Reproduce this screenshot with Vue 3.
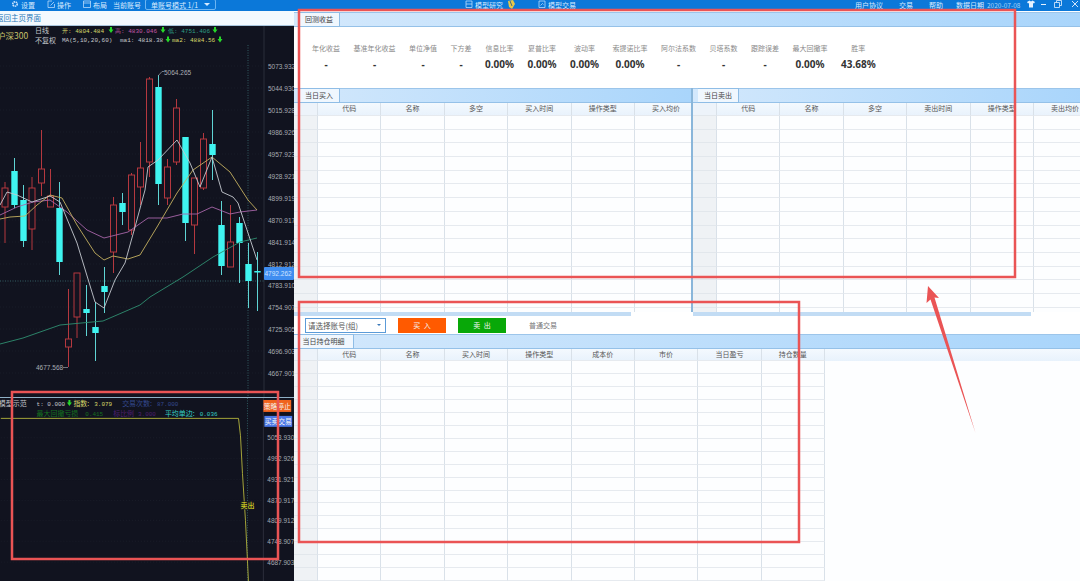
<template>
  <div class="screen">
    <header class="topbar">
      <svg class="ico first" viewBox="0 0 8 8"><circle cx="4" cy="4" r="2.2" fill="none" stroke="#cfe6ff" stroke-width="1.6" stroke-dasharray="1.4 .6" /></svg>
      <span class="tb t1">设置</span>
      <svg class="ico i2" viewBox="0 0 8 8"><path d="M1 7.5V1h4M7 2 3.5 5.5M7.5 4v3.5H1" fill="none" stroke="#cfe6ff" stroke-width=".7" /></svg>
      <span class="tb t1">操作</span>
      <svg class="ico i2" viewBox="0 0 8 8"><path d="M.5 1h7v6.5h-7zM.5 3h7" fill="none" stroke="#cfe6ff" stroke-width=".7" /></svg>
      <span class="tb t1">布局</span>
      <span class="tb account">当前账号</span>
      <div class="mode"><span>单账号模式 1/1</span><i class="caret"></i></div>
      <svg class="ico research" viewBox="0 0 8 8"><path d="M1 1h6v6.5H1zM1 4h6" fill="none" stroke="#cfe6ff" stroke-width=".7" /></svg>
      <span class="tb t1">模型研究</span>
      <svg class="ico sticker" viewBox="0 0 10 10"><path d="M2 1 7 0l2 4-3 5-3-2z" fill="#e6c84a" /><path d="M4 1l2 5" stroke="#3a6a8a" stroke-width="1" /></svg>
      <svg class="ico trade" viewBox="0 0 8 8"><path d="M1 1h6v6.5H1zM2.5 5.5l2-2 1 1" fill="none" stroke="#cfe6ff" stroke-width=".7" /></svg>
      <span class="tb t1">模型交易</span>
      <span class="tb protocol">用户协议</span>
      <span class="tb m16">交易</span>
      <span class="tb m16">帮助</span>
      <span class="tb m13">数据日期</span>
      <span class="tb date">2020-07-08</span>
      <svg class="ico shirt" viewBox="0 0 8 8"><path d="M2.5 .5 0 2l1 1.5 1-.5v4.5h4V3l1 .5L8 2 5.500 .5 4 1.500z" fill="#e4f1ff" /></svg>
      <i class="minimize"></i>
      <svg class="ico restore" viewBox="0 0 8 8"><path d="M.5 2.500h5v5h-5zM2.500 2.500V.5h5v5h-2" fill="none" stroke="#e4f1ff" stroke-width=".8" /></svg>
      <svg class="ico close" viewBox="0 0 6 8"><path d="M0 1l6 6M6 1 0 7" stroke="#e4f1ff" stroke-width=".9" /></svg>
    </header>

    <div class="body">
      <aside class="left">
        <div class="crumb"><span>返回主页界面</span></div>

        <svg class="chart" viewBox="0 26 294 371">
          <line v-for="y in priceRows" :key="'g' + y.y" x1="0" x2="264" :y1="y.y" :y2="y.y" class="grid-line" />
          <line x1="264" x2="264" y1="26" y2="397" class="axis" />
          <line x1="248" x2="248" y1="45" y2="397" class="cross" />
          <line x1="0" x2="264" y1="281" y2="281" class="cross" />

          <g v-for="c in candles" :key="c.x">
            <line :x1="c.x" :x2="c.x" :y1="c.hi" :y2="c.lo" :class="c.up ? 'wick-up' : 'wick-down'" />
            <rect v-if="c.up" :x="c.x - 3" :y="c.top" width="6" :height="c.bot - c.top" class="body-up" />
            <rect v-else :x="c.x - 3.2" :y="c.top" width="6.400" :height="c.bot - c.top" class="body-down" />
          </g>

          <polyline :points="ma60" class="ma green" />
          <polyline :points="ma20" class="ma purple" />
          <polyline :points="ma10" class="ma yellow" />
          <polyline :points="ma5" class="ma white" />

          <path d="M158 76 162 71.500h2" class="leader" />
          <text x="164" y="74.500" class="mark">5064.265</text>
          <path d="M63 367.500h5" class="leader" />
          <text x="36" y="370" class="mark">4677.568</text>

          <text x="-3" y="39" class="head index">沪深300</text>
          <text x="35" y="33" class="head">日线</text>
          <text x="35" y="42.500" class="head">不复权</text>
          <text x="62" y="32.500" class="small y">开: 4804.484</text>
          <text x="115" y="32.500" class="small pink">高: 4830.046</text>
          <text x="168" y="32.500" class="small teal">低: 4751.406</text>
          <text x="62" y="42" class="small w">MA(5,10,20,60)</text>
          <text x="120" y="42" class="small w">ma1: 4818.38</text>
          <text x="172" y="42" class="small y">ma2: 4884.56</text>
          <path
            v-for="a in headArrows"
            :key="a.x + '-' + a.y"
            :transform="`translate(${a.x} ${a.y})`"
            d="M-1 0h2v2.500h1.500L0 6-2.500 2.500H-1z"
            class="arrow"
          />

          <text v-for="p in priceRows" :key="p.label" x="268" :y="p.y + 2.500" class="price">{{ p.label }}</text>
          <rect x="264" y="267" width="30" height="13" rx="1" class="now" />
          <text x="264.500" y="276" class="now-text">4792.262</text>
        </svg>

        <svg class="chart lower" viewBox="0 397 294 184">
          <line v-for="p in lowerRows" :key="'l' + p.y" x1="0" x2="264" :y1="p.y" :y2="p.y" class="grid-line" />
          <line x1="264" x2="264" y1="397" y2="581" class="axis" />
          <line x1="248" x2="248" y1="397" y2="581" class="cross" />
          <polyline points="0,417.500 239,417.500 241,435 243,473 246,520 248,560 249,581" class="ma curve" />
          <text x="-2" y="405" class="head">模型示范</text>
          <text x="36" y="405" class="small w">t: 0.000</text>
          <path transform="translate(69 399)" d="M-1 0h2v2.500h1.500L0 6-2.500 2.500H-1z" class="arrow" />
          <text x="73" y="405" class="head y">指数:</text>
          <text x="94" y="405" class="small y">3.079</text>
          <text x="122" y="405" class="head navy">交易次数:</text>
          <text x="157" y="405" class="small navy">87.000</text>
          <text x="36" y="415" class="head dgreen">最大回撤亏损</text>
          <text x="85" y="415" class="small dgreen">0.415</text>
          <text x="113" y="415" class="head dpurple">标比例</text>
          <text x="138" y="415" class="small dpurple">3.000</text>
          <text x="165" y="415" class="head cyan">平均单边:</text>
          <text x="200" y="415" class="small cyan">0.036</text>
          <rect x="264" y="399" width="28" height="12" class="stop" />
          <text x="264.500" y="408" class="btn-text">策略停止</text>
          <rect x="265" y="415" width="28" height="11" class="deal" />
          <text x="265.500" y="423.500" class="btn-text">买卖交易</text>
          <text v-for="p in lowerRows" :key="p.label" x="268" :y="p.y + 2.500" class="price">{{ p.label }}</text>
          <rect x="241" y="501" width="14" height="8" class="sold-bg" />
          <text x="241" y="507.500" class="sold">卖出</text>
        </svg>
      </aside>

      <main class="right">
        <div class="strip first-strip"><i class="grip"></i><span class="tab">回测收益</span></div>
        <div class="stats">
          <div v-for="s in stats" :key="s.label" class="stat">
            <span class="stat-label">{{ s.label }}</span>
            <span class="stat-value">{{ s.value }}</span>
          </div>
        </div>

        <div class="split">
          <section v-for="t in dayTables" :key="t.title" class="pane">
            <div class="strip"><i class="grip"></i><span class="tab">{{ t.title }}</span></div>
            <div class="trow thead">
              <span class="corner"></span>
              <span v-for="c in t.cols" :key="c" class="cell">{{ c }}</span>
            </div>
            <div v-for="r in 15" :key="r" class="trow">
              <span class="corner"></span>
              <span v-for="c in t.cols" :key="c" class="cell"></span>
            </div>
          </section>
        </div>
        <div class="scroll"><i class="thumb"></i><i class="thumb second"></i></div>

        <div class="toolbar">
          <div class="picker"><span>请选择账号(组)</span><i class="picker-caret"></i></div>
          <button class="act buy">买 入</button>
          <button class="act sell">卖 出</button>
          <span class="plain">普通交易</span>
        </div>
        <div class="strip"><span class="tab wide">当日持仓明细</span></div>
        <div class="trow thead full">
          <span class="corner"></span>
          <span v-for="c in holdCols" :key="c" class="cell">{{ c }}</span>
        </div>
        <div v-for="r in 17" :key="r" class="trow">
          <span class="corner"></span>
          <span v-for="c in holdCols" :key="c" class="cell"></span>
        </div>
      </main>
    </div>

    <!-- 截图上的红色标注 -->
    <svg class="marks" viewBox="0 0 1080 581">
      <rect x="299" y="10" width="716" height="267" />
      <rect x="299" y="302" width="500" height="240" />
      <rect x="12" y="392" width="266" height="167" />
      <path d="M928 286 939 298 934.500 297.500 975.500 433 930.500 299.500 926.500 303z" class="pointer" />
    </svg>
  </div>
</template>

<script setup>
const candle = (x, hi, lo, top, bot, up) => ({ x, hi, lo, top, bot, up })

const candles = [
  candle(5, 182, 243, 188, 207, true),
  candle(14.5, 158, 208, 171, 205, false),
  candle(23.5, 185, 247, 200, 241, false),
  candle(32, 177, 250, 188, 229, true),
  candle(41.5, 130, 196, 169, 183, true),
  candle(50.5, 169, 207, 196, 207, true),
  candle(59.5, 182, 275, 208, 262, false),
  candle(68.5, 289, 367, 339, 347, true),
  candle(77, 273, 338, 273, 317, true),
  candle(86.5, 285, 336, 309, 313, false),
  candle(95.5, 302, 361, 327, 333, false),
  candle(104.5, 267, 313, 286, 292, false),
  candle(113.5, 197, 273, 205, 252, true),
  candle(122.5, 193, 225, 203, 212, false),
  candle(131.5, 173, 235, 175, 230, true),
  candle(140.5, 142, 205, 168, 187, true),
  candle(149.5, 77, 177, 79, 162, true),
  candle(158.5, 75, 205, 87, 184, false),
  candle(167.5, 159, 205, 167, 198, true),
  candle(176.5, 99, 165, 108, 162, true),
  candle(185.5, 137, 241, 137, 223, false),
  candle(194.5, 178, 254, 178, 225, true),
  candle(203.5, 133, 190, 139, 188, true),
  candle(212.5, 110, 180, 144, 155, false),
  candle(221.5, 201, 275, 225, 266, false),
  candle(230.5, 205, 267, 242, 267, true),
  candle(239.5, 217, 283, 223, 243, false),
  candle(248.5, 243, 308, 264, 281, false),
  candle(257.5, 252, 311, 271, 272.5, false)
]

const ma5 = '0,205 7,192 17,195 32,202 50,196 60,202 77,243 95,302 104,308 115,280 125,263 135,227 145,190 148,167 158,160 177,140 190,163 200,187 212,157 222,192 233,197 238,203 248,233 257,260'
const ma10 = '0,219 10,217 25,216 37,205 50,195 62,198 77,225 95,253 104,260 113,256 128,259 140,255 157,227 177,193 193,170 212,157 230,172 248,200 257,210'
const ma20 = '0,215 17,207 33,202 50,200 67,212 87,230 104,238 128,232 148,218 167,218 183,214 197,214 212,207 230,214 240,212 257,210'
const ma60 = '0,344 23,338 60,325 103,321 140,305 150,297 183,277 213,257 240,242 257,238'

const headArrows = [
  { x: 111, y: 27 }, { x: 163, y: 27 }, { x: 215, y: 27 },
  { x: 168, y: 36.5 }, { x: 220, y: 36.5 }
]

const priceRows = [
  ['5073.932', 66], ['5044.930', 88], ['5015.928', 110], ['4986.926', 132], ['4957.923', 154],
  ['4928.921', 176], ['4899.919', 198], ['4870.917', 220], ['4841.914', 242], ['4812.912', 264],
  ['4783.910', 285], ['4754.907', 307], ['4725.905', 329], ['4696.903', 351], ['4667.901', 373]
].map(([label, y]) => ({ label, y }))

const lowerRows = [
  ['5053.930', 437], ['4992.926', 458], ['4931.921', 479], ['4870.917', 500],
  ['4809.912', 520], ['4748.907', 541], ['4687.903', 562]
].map(([label, y]) => ({ label, y }))

const stats = [
  { label: '年化收益', value: '-' },
  { label: '基准年化收益', value: '-' },
  { label: '单位净值', value: '-' },
  { label: '下方差', value: '-' },
  { label: '信息比率', value: '0.00%' },
  { label: '夏普比率', value: '0.00%' },
  { label: '波动率', value: '0.00%' },
  { label: '索提诺比率', value: '0.00%' },
  { label: '阿尔法系数', value: '-' },
  { label: '贝塔系数', value: '-' },
  { label: '跟踪误差', value: '-' },
  { label: '最大回撤率', value: '0.00%' },
  { label: '胜率', value: '43.68%' }
]

const dayTables = [
  { title: '当日买入', cols: ['代码', '名称', '多空', '买入时间', '操作类型', '买入均价'] },
  { title: '当日卖出', cols: ['代码', '名称', '多空', '卖出时间', '操作类型', '卖出均价'] }
]

const holdCols = ['代码', '名称', '买入时间', '操作类型', '成本价', '市价', '当日盈亏', '持仓数量']
</script>

<style scoped>
.screen {
  position: relative;
  width: 1080px;
  height: 581px;
  overflow: hidden;
  display: flex;
  flex-direction: column;
  background: #fff;
  font-family: "Noto Sans CJK SC", "Noto Sans", sans-serif;
}

.topbar {
  flex: none;
  height: 11px;
  display: flex;
  align-items: center;
  overflow: hidden;
  background: #0b78d9;
  color: #d8ebff;
  font-size: 7px;
  line-height: 8px;
}
.tb { flex: none; margin-top: -2px; }
.t1 { margin-left: 2px; }
.ico { flex: none; width: 8px; height: 8px; margin-top: -3px; }
.ico.first { margin-left: 11px; }
.ico.i2 { margin-left: 12px; }
.account { margin-left: 6px; }
.mode {
  flex: none;
  width: 71px;
  height: 11px;
  margin: -3px 0 0 4px;
  padding: 1px 5px 0;
  box-sizing: border-box;
  display: flex;
  justify-content: space-between;
  align-items: center;
  border: 1px solid #6db5f2;
  border-radius: 2px;
}
.caret { border: 3px solid transparent; border-top-color: #d8ebff; border-bottom: 0; }
.research { margin-left: 249px; }
.sticker { width: 10px; height: 10px; margin-left: 3px; margin-top: -1px; }
.trade { margin-left: 22px; }
.protocol { margin-left: 279px; }
.m16 { margin-left: 16px; }
.m13 { margin-left: 13px; }
.date { margin-left: 3px; font-size: 6.500px; color: #a8d2f8; }
.shirt { margin-left: 7px; }
.minimize { flex: none; width: 5px; height: 1px; margin: -3px 0 0 6px; background: #e4f1ff; }
.restore { margin-left: 8px; }
.close { width: 6px; margin-left: 10px; }

.body { flex: 1; min-height: 0; display: flex; }

.left {
  flex: none;
  width: 294px;
  display: flex;
  flex-direction: column;
  background: #11131f;
}
.crumb {
  flex: none;
  height: 15px;
  box-sizing: border-box;
  background: #f3f9fe;
  border-bottom: 1px solid #a8c4dc;
  color: #2b78b8;
  font-size: 7.500px;
  line-height: 13px;
  overflow: hidden;
}
.crumb span { margin-left: -4px; display: block; }
.chart { flex: none; display: block; width: 294px; height: 371px; background: #11131f; }
.chart.lower { height: 184px; border-top: 1px solid #8fb0c6; box-sizing: border-box; }

.grid-line { stroke: #20232f; stroke-width: .6; stroke-dasharray: 1 2; }
.axis { stroke: #2b2e3b; stroke-width: 1; }
.cross { stroke: #3f7d80; stroke-width: .7; stroke-dasharray: 1 1.500; }
.wick-up { stroke: #b5383f; stroke-width: 1; }
.wick-down { stroke: #5fd4d4; stroke-width: 1; }
.body-up { fill: #151320; stroke: #b5383f; stroke-width: 1; }
.body-down { fill: #3ff4f0; }
.ma { fill: none; stroke-width: .9; }
.white { stroke: #c5c9d0; }
.yellow { stroke: #c4b060; }
.purple { stroke: #a765a8; }
.green { stroke: #2f8f70; }
.curve { stroke: #b4b43c; }
.leader { fill: none; stroke: #9aa0a8; stroke-width: .7; }
.mark { fill: #a9adb3; font-size: 6.500px; font-family: "Liberation Sans", sans-serif; }
.head { fill: #c4c7cc; font-size: 7px; }
.index { fill: #c9c26a; font-size: 8.500px; }
.small { font-size: 6px; font-family: "Liberation Mono", monospace; }
.y { fill: #d8d86a; }
.w { fill: #c4c7cc; }
.pink { fill: #c257a8; }
.teal { fill: #2f9f85; }
.navy { fill: #34498e; }
.dgreen { fill: #14701e; }
.dpurple { fill: #4e1f70; }
.cyan { fill: #35d0c4; }
.arrow { fill: #27d72a; }
.price { fill: #a7abb2; font-size: 6.500px; font-family: "Liberation Sans", sans-serif; }
.now { fill: #3f8df0; }
.now-text { fill: #cfe3ff; font-size: 6.500px; font-family: "Liberation Sans", sans-serif; }
.stop { fill: #f0641e; }
.deal { fill: #4a78e8; }
.btn-text { fill: #f4f4f4; font-size: 6.800px; }
.sold-bg { fill: #1c1d20; }
.sold { fill: #f2f020; font-size: 7px; }

.right {
  flex: none;
  width: 786px;
  display: flex;
  flex-direction: column;
  overflow: hidden;
  background: #fdfeff;
  color: #555;
  font-size: 7px;
}
.strip {
  flex: none;
  height: 15px;
  box-sizing: border-box;
  display: flex;
  background: linear-gradient(90deg, #d3e8fc, #a9d5fb);
  border-top: 1px solid #9cc5ea;
  border-bottom: 1px solid #95c1e8;
}
.first-strip { margin-top: 1px; }
.grip { flex: none; width: 5px; }
.tab {
  flex: none;
  width: 41px;
  box-sizing: border-box;
  text-align: center;
  line-height: 12px;
  background: #f0f7fe;
  border-right: 1px solid #8fbde6;
  color: #444;
  margin-top: -1px;
  margin-bottom: -1px;
  border-top: 1px solid #8fbde6;
  border-bottom: 1px solid #8fbde6;
}
.tab.wide { width: 60px; }

.stats {
  flex: none;
  height: 61px;
  box-sizing: border-box;
  padding: 16px 0 0 18px;
  display: flex;
  gap: 13.500px;
  background: #fff;
}
.stat { flex: none; display: flex; flex-direction: column; align-items: center; gap: 5px; }
.stat-label { line-height: 10px; color: #8a8a8a; }
.stat-value {
  line-height: 12px;
  font-family: "Noto Sans", sans-serif;
  font-size: 10px;
  font-weight: 700;
  color: #333;
}

.split { flex: none; height: 224px; display: flex; overflow: hidden; }
.pane { flex: none; width: 397px; overflow: hidden; }
.pane + .pane { width: 389px; border-left: 2px solid #8ab6da; }

.trow { display: flex; height: 13.700px; box-sizing: border-box; }
.thead { height: 13px; background: linear-gradient(#f4f9fe, #e8f2fc); line-height: 11px; color: #555; }
.full { width: 786px; }
.corner {
  flex: none;
  width: 24px;
  background: #eff2f5;
  border-right: 1px solid #d9e1e9;
  border-bottom: 1px solid #e2e7ec;
  box-sizing: border-box;
}
.thead .corner { background: #edf3fa; }
.cell {
  flex: none;
  width: 63.375px;
  box-sizing: border-box;
  text-align: center;
  border-right: 1px solid #d9e1e9;
  border-bottom: 1px solid #e6eaef;
}

.scroll { flex: none; height: 4px; display: flex; background: #fff; }
.thumb { flex: none; width: 337px; height: 4px; background: #c2dcf4; }
.thumb.second { width: 338px; margin-left: 62px; }

.toolbar {
  flex: none;
  height: 18px;
  display: flex;
  align-items: center;
  background: #fff;
  padding-left: 11px;
}
.picker {
  flex: none;
  width: 81px;
  height: 15px;
  box-sizing: border-box;
  padding: 0 4px 0 2px;
  display: flex;
  align-items: center;
  justify-content: space-between;
  border: 1px solid #5b9bd8;
  color: #555;
  font-size: 7.500px;
}
.picker-caret { border: 2.500px solid transparent; border-top-color: #3a78b8; border-bottom: 0; }
.act {
  flex: none;
  width: 48px;
  height: 15px;
  padding: 0;
  border: 0;
  color: #f4f4f4;
  font: inherit;
  line-height: 15px;
  word-spacing: 2px;
}
.buy { margin-left: 12px; background: #ff5a00; }
.sell { margin-left: 12px; background: #08a808; }
.plain { margin-left: 23px; color: #777; }

.marks {
  position: absolute;
  left: 0;
  top: 0;
  width: 1080px;
  height: 581px;
  pointer-events: none;
}
.marks rect { fill: none; stroke: #ea5455; stroke-width: 2.500; }
.marks .pointer { fill: #ea5455; stroke: none; }
</style>

<style>
html, body { margin: 0; overflow: hidden; background: #fff; }
</style>
